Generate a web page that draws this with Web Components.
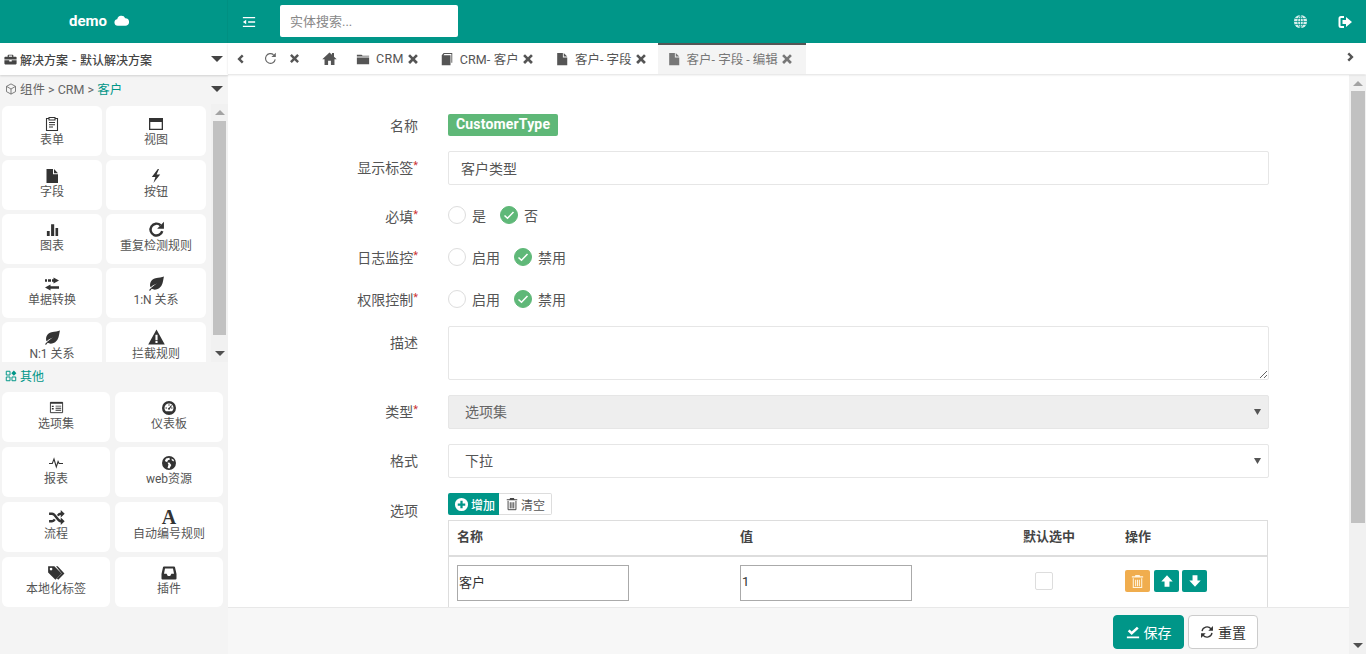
<!DOCTYPE html>
<html lang="zh">
<head>
<meta charset="utf-8">
<title>demo</title>
<style>
  html, body { margin: 0; height: 100%; overflow: hidden; }
  body { font: 13px Roboto, "Noto Sans CJK SC", sans-serif; color: #555; }
</style>
</head>
<body>
<app-shell>
  <top-bar slot="top"></top-bar>
  <side-bar slot="side"></side-bar>
  <tab-bar slot="tabs">
    <tab-item icon="folder" style="letter-spacing:.3px">CRM</tab-item>
    <tab-item icon="book" style="letter-spacing:.15px">CRM- 客户</tab-item>
    <tab-item icon="file" style="margin-right:-2px">客户- 字段</tab-item>
    <tab-item icon="file" active>客户- 字段 - 编辑</tab-item>
  </tab-bar>
  <edit-page slot="main"></edit-page>
</app-shell>

<script>
var ICONS = {
  cloud: '<path d="M4 13.5a3.5 3.5 0 0 1-.6-6.95A4.6 4.6 0 0 1 12 5.6a3.95 3.95 0 0 1 .2 7.9z"/>',
  outdent: '<path d="M1 2.2h14v1.6H1zM7 7.2h8v1.6H7zM1 12.2h14v1.6H1zM1 8l3.8-2.6v5.2z"/>',
  remove: '<path d="M4 1.5l4 4 4-4L14.5 4l-4 4 4 4-2.5 2.5-4-4-4 4L1.5 12l4-4-4-4z"/>',
  home: '<path d="M8 1.5L.3 8.7h2.4V15h3.8v-4.5h3V15h3.8V8.7h2.4L12.8 6V2.2h-2.2v1.7z"/>',
  folder: '<path d="M1 5.2V3h5.4l1.2 1.4H15v.8zM1 6.2h14V14H1z"/>',
  book: '<path d="M2 3.6L4.2 1H14v11.4h-1V2.2H5L4 3.6h8V15H2z"/>',
  file: '<path d="M2.5 1H9v5.2h5V15H2.5zM10 1l4 4.2h-4z"/>',
  briefcase: '<path fill-rule="evenodd" d="M5.5 2h5a1 1 0 0 1 1 1v1.5h3a1 1 0 0 1 1 1V8H.5V5.5a1 1 0 0 1 1-1h3V3a1 1 0 0 1 1-1zm.5 1.2v1.3h4V3.2zM.5 9h6v1.500h3V9h6v4a1 1 0 0 1-1 1h-13a1 1 0 0 1-1-1z"/>',
  cube: '<path fill="none" stroke="currentColor" stroke-width="1.1" d="M8 1.2l6 3.3v7L8 14.8l-6-3.3v-7zM2 4.5L8 8l6-3.5M8 8v6.8"/>',
  clipboard: '<path fill="none" stroke="currentColor" stroke-width="1.1" d="M5 2.5H2.500v12h11v-12H11M5 1.5h6v2.5H5z"/><path d="M5 6h6v1H5zM5 8.200h6v1H5zM5 10.400h4v1H5z"/>',
  window: '<path fill-rule="evenodd" d="M1 2h14v12H1zM2.3 6v6.7h11.4V6z"/>',
  flash: '<path d="M9.8 1L3.8 9h3.6l-2 6L12.2 6.6H8.6L11 1z"/>',
  bars: '<path d="M2 9.5h3V15H2zM6.5 2.5h3.3V15H6.5zM11.2 6.5H14V15h-2.8z"/>',
  refresh: '<path fill="none" stroke="currentColor" stroke-width="2.3" d="M13.4 9.5A5.6 5.6 0 1 1 11.8 4"/><path d="M15 .8v6.4H8.600z"/>',
  reload: '<path fill="none" stroke="currentColor" stroke-width="1.4" d="M13.8 9A6 6 0 1 1 11.800 3.400"/><path d="M14.5 .8v5.4H9.100z"/>',
  transfer: '<path d="M9.5 1.5L15 4.5l-5.500 3V5.700H8V3.300h1.500zM1 3.300h2v2.400H1zM4 3.300h3v2.400H4zM6.500 8.500v1.800H15v2.400H6.500v1.800L1 11.500z"/>',
  leaf: '<path d="M15 1.5c-1 4.500-1 8.500-4.500 11-2.500 1.700-5.500 1.500-7 .5L1.800 15 1 14.200c1.500-1.700 3-3.200 7.500-6.200-3 1-5 2.500-6.100 3.600C1 8 3 4 7 3c3.500-.8 6-.5 8-1.500z"/>',
  warning: '<path fill-rule="evenodd" d="M8 .5l7.800 14H.2zM7 5.500v5h2v-5zM7 11.300v1.800h2v-1.800z"/>',
  widgets: '<path fill="none" stroke="currentColor" stroke-width="1.3" d="M1.700 1.700h5v5h-5zM1.700 9.300h5v5h-5zM9.300 9.300h5v5h-5z"/><path d="M11.800.8l3.400 3.400-3.400 3.400-3.400-3.400z"/>',
  calendar: '<path fill="none" stroke="currentColor" d="M1.500 2.500h13v11h-13z"/><path d="M1.500 2h13v2h-13zM3 6h2v1.500H3zM7 6h6v1H7zM7 8.200h6v1H7zM7 10.400h6v1H7zM3 8.500h2V10H3z"/>',
  dashboard: '<path fill-rule="evenodd" d="M8 1a7 7 0 1 1 0 14A7 7 0 0 1 8 1zm0 2.500A4.500 4.500 0 0 0 3.500 8c0 1.300.5 2.400 1.400 3.200h6.200A4.500 4.500 0 0 0 12.500 8 4.500 4.500 0 0 0 8 3.500zM7.500 4.300h1v1.500h-1zM4.500 7.500h1.500v1H4.500zM10 7.500h1.500v1H10zM10.200 5l.7.700L9 8.700a1 1 0 1 1-.9-.9z"/>',
  pulse: '<path fill="none" stroke="currentColor" stroke-width="1.1" d="M1 8.500h3.300L6 4l2.300 8 1.800-5.500 1 2H15"/>',
  globe: '<path fill-rule="evenodd" d="M8 1a7 7 0 1 1 0 14A7 7 0 0 1 8 1zM5 3.500L3.800 6l2.400 1.200L7.500 9.500 6.500 13l2 .6 1.800-3.600-2-2.500-2.300-.2 1-2 2-.7L8.300 2.800zM10.500 3.600l.3 1.600 1.700 1.400.5-1.500z"/>',
  random: '<path fill="none" stroke="currentColor" stroke-width="2.2" d="M1 4.500h2.800c3.600 0 4.800 7 8.400 7H13M1 11.500h2.800c1.200 0 2-.8 2.600-1.800M9.200 6.300c.7-1 1.600-1.800 3-1.800H13"/><path d="M12 1l3.700 3.500L12 8zM12 8l3.700 3.500L12 15z"/>',
  tags: '<path fill-rule="evenodd" d="M1 2h5.500l6.500 6.500L7.500 14 1 7.500zM3.600 3.300a1.200 1.200 0 1 0 0 2.400 1.200 1.200 0 0 0 0-2.400z"/><path d="M8 2h1.500l6 6.500L10 14l-1.200-1.200 4.300-4.300z"/>',
  inbox: '<path fill-rule="evenodd" d="M3 1.500h10a1 1 0 0 1 1 .8L15.500 9v4.500a1 1 0 0 1-1 1h-13a1 1 0 0 1-1-1V9L2 2.300a1 1 0 0 1 1-.8zM4 3.500L3 8.800h2.600L6.800 11h2.400l1.200-2.200H13L12 3.500z"/>',
  plus: '<path fill-rule="evenodd" d="M8 1a7 7 0 1 1 0 14A7 7 0 0 1 8 1zM6.800 4v2.800H4v2.400h2.800V12h2.400V9.200H12V6.800H9.200V4z"/>',
  trash: '<path d="M5.800 1h4.400l.6 1.500H14v1.200H2V2.500h3.200z"/><path fill="none" stroke="currentColor" stroke-width="1.1" d="M3.500 4.500v10h9v-10M6 6v7M8 6v7M10 6v7"/>',
  up: '<path d="M8 1.500l6.500 7h-3.700v6H5.200v-6H1.500z"/>',
  down: '<path d="M8 14.500l6.500-7h-3.700v-6H5.200v6H1.500z"/>',
  saved: '<path d="M1 13h14v2H1zM2 7l2.100-2 2.400 2.400L12.500 2 14.500 4 6.500 11.500z"/>',
  sync: '<path fill="none" stroke="currentColor" stroke-width="1.5" d="M2.300 7A5.800 5.800 0 0 1 12.500 4.300M13.700 9a5.800 5.800 0 0 1-10.200 2.700"/><path d="M14.800 1.200V6.500H9.500zM1.200 14.800V9.500h5.300z"/>',
  logout: '<path d="M7 2H4a2.500 2.500 0 0 0-2.500 2.500v7A2.500 2.500 0 0 0 4 14h3v-2H4a.5.500 0 0 1-.5-.5v-7A.5.500 0 0 1 4 4h3zM9 3l6 5-6 5v-3H5.500V6H9z"/>',
  world: '<circle cx="8" cy="8" r="7" fill="currentColor" opacity=".85"/><path fill="none" stroke="#009688" stroke-width=".8" d="M1 8h14M2 4.800h12M2 11.200h12M8 1v14M8 1c-4 4-4 10 0 14M8 1c4 4 4 10 0 14"/>',
  left: '<path d="M10.500 2l2.300 2.300L9 8l3.800 3.700-2.300 2.300-6-6z"/>',
  right: '<path d="M5.500 2L3.200 4.300 7 8l-3.800 3.700L5.500 14l6-6z"/>'
};

class AppIcon extends HTMLElement {
  constructor() {
    super();
    this.attachShadow({ mode: "open" });
  }
  connectedCallback() {
    var size = this.getAttribute("size") || 14;
    this.shadowRoot.innerHTML = `
      <style>
        :host { display: inline-flex; flex: none; }
        svg { display: block; fill: currentColor; }
      </style>
      <svg width="${size}" height="${size}" viewBox="0 0 16 16">${ICONS[this.getAttribute("name")] || ""}</svg>`;
  }
}
customElements.define("app-icon", AppIcon);

// the browser hides real scrollbars here, so the rail is drawn
class ScrollRail extends HTMLElement {
  constructor() {
    super();
    this.attachShadow({ mode: "open" });
  }
  connectedCallback() {
    this.shadowRoot.innerHTML = `
      <style>
        :host {
          display: flex;
          flex-direction: column;
          flex: none;
          width: 17px;
          background: #f1f1f1;
        }
        .btn { flex: none; height: var(--btn, 17px); display: flex; align-items: center; justify-content: center; }
        .btn.end { margin-top: auto; height: 17px; }
        .up { border: 5px solid transparent; border-top: 0; border-bottom: 5px solid #a3a3a3; }
        .down { border: 5px solid transparent; border-bottom: 0; border-top: 5px solid #505050; }
        .thumb {
          flex: none;
          height: ${this.getAttribute("thumb")}px;
          margin: 0 var(--inset-r, 1px) 0 var(--inset-l, 2px);
          background: #c1c1c1;
        }
      </style>
      <div class="btn"><span class="up"></span></div>
      <div class="thumb"></div>
      <div class="btn end"><span class="down"></span></div>`;
  }
}
customElements.define("scroll-rail", ScrollRail);

class AppShell extends HTMLElement {
  constructor() {
    super();
    this.attachShadow({ mode: "open" });
    this.shadowRoot.innerHTML = `
      <style>
        :host {
          display: grid;
          grid-template-columns: 228px 1fr;
          grid-template-rows: 43px 32px 1fr;
          height: 654px;
          width: 1366px;
          overflow: hidden;
        }
        ::slotted([slot=top]) { grid-column: 1 / 3; grid-row: 1; }
        ::slotted([slot=side]) { grid-column: 1; grid-row: 2 / 4; }
        ::slotted([slot=tabs]) { grid-column: 2; grid-row: 2; }
        ::slotted([slot=main]) { grid-column: 2; grid-row: 3; min-height: 0; }
      </style>
      <slot name="top"></slot>
      <slot name="side"></slot>
      <slot name="tabs"></slot>
      <slot name="main"></slot>`;
  }
}
customElements.define("app-shell", AppShell);

class TopBar extends HTMLElement {
  constructor() {
    super();
    this.attachShadow({ mode: "open" });
    this.shadowRoot.innerHTML = `
      <style>
        :host {
          display: flex;
          align-items: center;
          background: #009688;
          color: #fff;
          height: 43px;
        }
        .brand {
          width: 228px;
          height: 43px;
          box-sizing: border-box;
          padding: 0 0 2px 69px;
          display: flex;
          align-items: center;
          gap: 7px;
          font-size: 15px;
          font-weight: 700;
          border-right: 1px solid rgba(0,0,0,.04);
        }
        .menu { margin-left: 14px; }
        input {
          margin-left: 24px;
          margin-bottom: 1px;
          width: 178px;
          height: 32px;
          box-sizing: border-box;
          border: 0;
          border-radius: 2px;
          padding: 0 10px;
          background: #fff;
          font: 13px Roboto, "Noto Sans CJK SC", sans-serif;
        }
        input::placeholder { color: #888; opacity: 1; }
        .right { margin-left: auto; display: flex; align-items: center; gap: 29px; padding-right: 13px; }
      </style>
      <div class="brand">demo <app-icon name="cloud" size="15"></app-icon></div>
      <app-icon class="menu" name="outdent" size="14"></app-icon>
      <input placeholder="实体搜索...">
      <div class="right">
        <app-icon name="world" size="15"></app-icon>
        <app-icon name="logout" size="16"></app-icon>
      </div>`;
  }
}
customElements.define("top-bar", TopBar);

class SideCard extends HTMLElement {
  constructor() {
    super();
    this.attachShadow({ mode: "open" });
  }
  connectedCallback() {
    var icon = this.getAttribute("icon");
    var size = this.getAttribute("size") || 16;
    var glyph = icon ? `<app-icon name="${icon}" size="${size}"></app-icon>` : `<span class="glyph">A</span>`;
    this.shadowRoot.innerHTML = `
      <style>
        :host {
          display: flex;
          flex-direction: column;
          align-items: center;
          box-sizing: border-box;
          height: 50px;
          padding-top: 7px;
          background: #fff;
          border-radius: 6px;
          font-size: 12px;
          line-height: 16px;
          color: #555;
          white-space: nowrap;
        }
        :host([low]) { padding-top: 9px; }
        app-icon { color: #333; height: 17px; align-items: center; }
        .glyph { height: 17px; font: 700 20px/17px "Liberation Serif", serif; color: #333; }
      </style>
      ${glyph}
      <slot></slot>`;
  }
}
customElements.define("side-card", SideCard);

class SideBar extends HTMLElement {
  constructor() {
    super();
    this.attachShadow({ mode: "open" });
    this.shadowRoot.innerHTML = `
      <style>
        :host {
          display: flex;
          flex-direction: column;
          background: #f4f4f4;
          font-size: 12px;
          min-height: 0;
        }
        .solution {
          height: 32px;
          flex: none;
          box-sizing: border-box;
          display: flex;
          align-items: center;
          gap: 3px;
          padding: 0 5px 0 4px;
          background: #fff;
          color: #444;
          font-weight: 500;
          word-spacing: 1px;
          box-shadow: 0 1px 2px rgba(0,0,0,.15);
          position: relative;
        }
        .crumb {
          height: 29px;
          flex: none;
          box-sizing: border-box;
          padding: 0 5px 2px;
          display: flex;
          align-items: center;
          gap: 3px;
          color: #666;
          font-size: 12.5px;
        }
        .crumb b { font-weight: 400; color: #009688; }
        .caret {
          margin-left: auto;
          width: 0;
          height: 0;
          border: 6px solid transparent;
          border-top-color: #444;
          border-bottom: 0;
        }
        .panel { flex: none; height: 258px; display: flex; }
        .cards {
          flex: none;
          width: 211px;
          box-sizing: border-box;
          padding: 2px 0 0 2px;
          overflow: hidden;
          display: grid;
          grid-template-columns: 100px 100px;
          grid-auto-rows: 50px;
          gap: 4px;
        }
        scroll-rail { --inset-l: 2px; --inset-r: 2px; }
        .other {
          flex: none;
          height: 30px;
          display: flex;
          align-items: center;
          gap: 3px;
          padding: 0 5px 3px;
          box-sizing: border-box;
          color: #009688;
        }
        .more {
          display: grid;
          grid-template-columns: 108px 108px;
          grid-auto-rows: 50px;
          column-gap: 5px;
          row-gap: 5px;
          padding-left: 2px;
        }
      </style>
      <div class="solution">
        <app-icon name="briefcase" size="13"></app-icon>
        <span>解决方案 - 默认解决方案</span>
        <span class="caret"></span>
      </div>
      <div class="crumb">
        <app-icon name="cube" size="12"></app-icon>
        <span>组件 &gt; CRM &gt; <b>客户</b></span>
        <span class="caret"></span>
      </div>
      <div class="panel">
        <div class="cards">
          <side-card icon="clipboard" low>表单</side-card>
          <side-card icon="window" low>视图</side-card>
          <side-card icon="file">字段</side-card>
          <side-card icon="flash">按钮</side-card>
          <side-card icon="bars" size="15">图表</side-card>
          <side-card icon="refresh" size="17">重复检测规则</side-card>
          <side-card icon="transfer">单据转换</side-card>
          <side-card icon="leaf" size="17">1:N 关系</side-card>
          <side-card icon="leaf" size="17">N:1 关系</side-card>
          <side-card icon="warning" size="17">拦截规则</side-card>
        </div>
        <scroll-rail thumb="214"></scroll-rail>
      </div>
      <div class="other">
        <app-icon name="widgets" size="12"></app-icon>
        <span>其他</span>
      </div>
      <div class="more">
        <side-card icon="calendar" size="15">选项集</side-card>
        <side-card icon="dashboard">仪表板</side-card>
        <side-card icon="pulse">报表</side-card>
        <side-card icon="globe">web资源</side-card>
        <side-card icon="random" size="17">流程</side-card>
        <side-card>自动编号规则</side-card>
        <side-card icon="tags" size="18">本地化标签</side-card>
        <side-card icon="inbox" size="16">插件</side-card>
      </div>`;
  }
}
customElements.define("side-bar", SideBar);

class TabItem extends HTMLElement {
  constructor() {
    super();
    this.attachShadow({ mode: "open" });
  }
  connectedCallback() {
    this.shadowRoot.innerHTML = `
      <style>
        :host {
          display: flex;
          align-items: center;
          height: 31px;
          box-sizing: border-box;
          padding: 0 13px 0 8px;
          font-size: 12.5px;
          color: #555;
          white-space: nowrap;
        }
        :host([active]) {
          background: #f4f4f4;
          border-top: 2px solid #555;
          padding: 0 13px 2px 9px;
          color: #777;
        }
        .kind { margin-right: 6px; }
        .close { margin-left: 3px; }
      </style>
      <app-icon class="kind" name="${this.getAttribute("icon")}" size="14"></app-icon>
      <slot></slot>
      <app-icon class="close" name="remove" size="12"></app-icon>`;
  }
}
customElements.define("tab-item", TabItem);

class TabBar extends HTMLElement {
  constructor() {
    super();
    this.attachShadow({ mode: "open" });
    this.shadowRoot.innerHTML = `
      <style>
        :host {
          display: flex;
          align-items: flex-start;
          height: 31px;
          background: #fff;
          color: #555;
          box-shadow: 0 1px 2px rgba(0,0,0,.12);
          position: relative;
          z-index: 1;
        }
        .tools { display: flex; align-items: center; height: 31px; padding-left: 6px; }
        .refresh { margin-left: 18px; color: #666; }
        .stop { margin-left: 12px; }
        .home { margin-left: 22px; margin-right: 11px; }
        .tabs { display: flex; }
        .next { margin-left: auto; margin-right: 9px; height: 28px; align-items: center; }
      </style>
      <div class="tools">
        <app-icon name="left" size="12"></app-icon>
        <app-icon class="refresh" name="reload" size="13"></app-icon>
        <app-icon class="stop" name="remove" size="11"></app-icon>
        <app-icon class="home" name="home" size="15"></app-icon>
      </div>
      <div class="tabs"><slot></slot></div>
      <app-icon class="next" name="right" size="12"></app-icon>`;
  }
}
customElements.define("tab-bar", TabBar);

class FormRow extends HTMLElement {
  constructor() {
    super();
    this.attachShadow({ mode: "open" });
  }
  connectedCallback() {
    var star = this.hasAttribute("required") ? `<i>*</i>` : "";
    this.shadowRoot.innerHTML = `
      <style>
        :host {
          display: grid;
          grid-template-columns: 190px 821px;
          column-gap: 30px;
          font-size: 14px;
        }
        label {
          text-align: right;
          line-height: 34px;
          height: 34px;
          color: #555;
          white-space: nowrap;
          transform: translateY(var(--label-shift, 0));
        }
        i { color: #c33; font-style: normal; font-size: 11px; vertical-align: 4px; line-height: 0; }
      </style>
      <label>${this.getAttribute("label")}${star}</label>
      <div><slot></slot></div>`;
  }
}
customElements.define("form-row", FormRow);

class RadioGroup extends HTMLElement {
  constructor() {
    super();
    this.attachShadow({ mode: "open" });
  }
  connectedCallback() {
    var checked = this.getAttribute("checked");
    var items = this.getAttribute("options").split(",").map((o) => `
      <span class="opt${o === checked ? " on" : ""}">
        <span class="dot"><svg width="12" height="12" viewBox="0 0 12 12"><path fill="none" stroke="#fff" stroke-width="1.5" d="M1.5 6.5l3 2.8 6-6.3"/></svg></span>
        ${o}
      </span>`).join("");
    this.shadowRoot.innerHTML = `
      <style>
        :host { display: flex; align-items: center; height: 34px; gap: 14px; font-size: 14px; color: #555; }
        .opt { display: flex; align-items: center; gap: 6px; }
        .dot {
          width: 18px;
          height: 18px;
          box-sizing: border-box;
          border: 1px solid #ddd;
          border-radius: 50%;
          display: flex;
          align-items: center;
          justify-content: center;
        }
        .dot svg { display: none; }
        .on .dot { background: #5fb878; border-color: #5fb878; }
        .on .dot svg { display: block; }
      </style>
      ${items}`;
  }
}
customElements.define("radio-group", RadioGroup);

class OptionsTable extends HTMLElement {
  constructor() {
    super();
    this.attachShadow({ mode: "open" });
    this.shadowRoot.innerHTML = `
      <style>
        :host { display: block; font-size: 12px; }
        .tools { display: flex; height: 22px; }
        .add, .clear {
          display: flex;
          align-items: center;
          gap: 2px;
          height: 22px;
          box-sizing: border-box;
          white-space: nowrap;
        }
        .add { background: #009688; color: #fff; font-weight: 500; padding: 0 3px 0 6px; border-radius: 2px 0 0 2px; width: 51px; }
        .clear { border: 1px solid #ddd; border-left: 0; border-radius: 0 2px 2px 0; padding: 0 5px 0 6px; color: #555; width: 53px; }
        .clear app-icon { color: #444; }
        .table {
          margin-top: 5px;
          width: 820px;
          box-sizing: border-box;
          border: 1px solid #ddd;
          display: grid;
          grid-template-columns: 283px 283px 102px 1fr;
        }
        .head {
          height: 36px;
          box-sizing: border-box;
          padding-left: 8px;
          font-weight: 700;
          font-size: 13px;
          line-height: 32px;
          color: #444;
          border-bottom: 2px solid #ddd;
        }
        .cell { height: 60px; padding: 8px 0 0 8px; box-sizing: border-box; }
        .cell input {
          display: block;
          width: 172px;
          height: 36px;
          box-sizing: border-box;
          border: 1px solid #aaa;
          padding: 0 1px 3px;
          font: 13px Roboto, "Noto Sans CJK SC", sans-serif;
          color: #333;
          background: #fff;
        }
        .check { width: 18px; height: 18px; margin: 7px 0 0 12px; box-sizing: border-box; border: 1px solid #ddd; border-radius: 2px; }
        .ops { display: flex; gap: 4px; margin-top: 5px; }
        .ops span {
          width: 25px;
          height: 22px;
          border-radius: 2px;
          background: #009688;
          color: #fff;
          display: flex;
          align-items: center;
          justify-content: center;
        }
        .ops .del { background: #f0ad4e; color: #fff5e0; }
        .ops span + span + span { margin-left: -1px; }
      </style>
      <div class="tools">
        <div class="add"><app-icon name="plus" size="15"></app-icon>增加</div>
        <div class="clear"><app-icon name="trash" size="14"></app-icon>清空</div>
      </div>
      <div class="table">
        <div class="head">名称</div><div class="head">值</div><div class="head">默认选中</div><div class="head">操作</div>
        <div class="cell"><input value="客户"></div>
        <div class="cell"><input value="1"></div>
        <div class="cell"><div class="check"></div></div>
        <div class="cell"><div class="ops">
          <span class="del"><app-icon name="trash" size="15"></app-icon></span>
          <span><app-icon name="up" size="14"></app-icon></span>
          <span><app-icon name="down" size="14"></app-icon></span>
        </div></div>
      </div>`;
  }
}
customElements.define("options-table", OptionsTable);

class EditPage extends HTMLElement {
  constructor() {
    super();
    this.attachShadow({ mode: "open" });
    this.shadowRoot.innerHTML = `
      <style>
        :host { display: flex; height: 579px; background: #fff; }
        .page { flex: 1; min-width: 0; display: flex; flex-direction: column; }
        scroll-rail { --btn: 16px; }
        form { display: block; flex: 1; min-height: 0; box-sizing: border-box; padding-top: 34px; overflow: hidden; }
        form-row { margin-top: 8px; }
        form-row:first-child { margin-top: 0; }
        .r-req { margin-top: 13px; --label-shift: 2px; }
        .r-radio { --label-shift: 1px; }
        .r-desc { margin-top: 10px; }
        .r-sel { margin-top: 15px; }
        .r-opt { margin-top: 15px; --label-shift: 1px; }
        .tag {
          display: inline-block;
          margin-top: 5px;
          height: 22px;
          line-height: 21px;
          padding: 0 8px;
          background: #5fb878;
          color: #fff;
          font-weight: 700;
          font-size: 14px;
          letter-spacing: .17px;
          border-radius: 2px;
        }
        input, textarea, select {
          display: block;
          width: 100%;
          box-sizing: border-box;
          border: 1px solid #e6e6e6;
          border-radius: 2px;
          background: #fff;
          color: #555;
          font: 14px Roboto, "Noto Sans CJK SC", sans-serif;
        }
        input { height: 34px; padding: 0 12px; }
        textarea { height: 54px; padding: 6px 12px; }
        select {
          height: 34px;
          padding: 0 16px;
          appearance: none;
          background: #fff url("data:image/svg+xml,%3Csvg xmlns='http://www.w3.org/2000/svg' width='8' height='6'%3E%3Cpath fill='%23555' d='M0 0h7L3.500 6z'/%3E%3C/svg%3E") no-repeat right 6px center;
        }
        select[disabled] { background-color: #eee; color: #666; opacity: 1; }
        footer {
          flex: none;
          height: 47px;
          box-sizing: border-box;
          background: #f7f7f7;
          border-top: 1px solid #e8e8e8;
          display: flex;
          justify-content: flex-end;
          align-items: center;
          gap: 4px;
          padding: 1px 91px 0 0;
        }
        button {
          height: 34px;
          width: 71px;
          box-sizing: border-box;
          display: flex;
          align-items: center;
          justify-content: center;
          gap: 4px;
          border-radius: 4px;
          border: 1px solid #009688;
          background: #009688;
          color: #fff;
          font: 14px Roboto, "Noto Sans CJK SC", sans-serif;
        }
        button.plain { width: 70px; background: #fff; border-color: #ccc; color: #333; }
      </style>
      <div class="page">
        <form>
          <form-row label="名称"><span class="tag">CustomerType</span></form-row>
          <form-row label="显示标签" required><input value="客户类型"></form-row>
          <form-row class="r-req" label="必填" required><radio-group options="是,否" checked="否"></radio-group></form-row>
          <form-row class="r-radio" label="日志监控" required><radio-group options="启用,禁用" checked="禁用"></radio-group></form-row>
          <form-row class="r-radio" label="权限控制" required><radio-group options="启用,禁用" checked="禁用"></radio-group></form-row>
          <form-row class="r-desc" label="描述"><textarea></textarea></form-row>
          <form-row class="r-sel" label="类型" required><select disabled><option>选项集</option></select></form-row>
          <form-row class="r-sel" label="格式"><select><option>下拉</option></select></form-row>
          <form-row class="r-opt" label="选项"><options-table></options-table></form-row>
        </form>
        <footer>
          <button type="button"><app-icon name="saved" size="14"></app-icon>保存</button>
          <button type="button" class="plain"><app-icon name="sync" size="14"></app-icon>重置</button>
        </footer>
      </div>
      <scroll-rail thumb="432"></scroll-rail>`;
  }
}
customElements.define("edit-page", EditPage);
</script>
</body>
</html>
